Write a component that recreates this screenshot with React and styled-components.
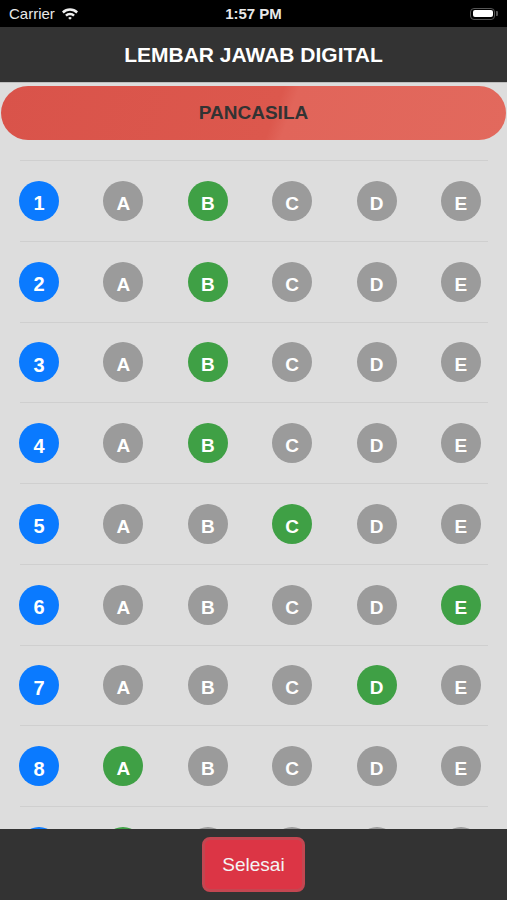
import React from "react"
import styled, { createGlobalStyle } from "styled-components"

const GlobalStyle = createGlobalStyle`
    html, body {
        margin: 0;
        padding: 0;
        background: #dddddd;
        font-family: "Liberation Sans", Arial, sans-serif;
    }
    * { box-sizing: border-box; }
`

const Screen = styled.div`
    width: 507px;
    height: 900px;
    display: flex;
    flex-direction: column;
    background: #dddddd;
    overflow: hidden;
`

const StatusBar = styled.div`
    height: 27px;
    background: #000;
    color: #e8e8e8;
    display: grid;
    grid-template-columns: 1fr auto 1fr;
    align-items: center;
    padding: 0 9px 0 9px;
    font-size: 15px;
`

const Carrier = styled.div`
    display: flex;
    align-items: center;
    gap: 6px;
`

const Time = styled.div`
    font-weight: bold;
    font-size: 15px;
`

const Battery = styled.div`
    justify-self: end;
    display: flex;
    align-items: center;
`

const BatteryBody = styled.div`
    width: 25px;
    height: 12px;
    border: 1.5px solid #555;
    border-radius: 4px;
    padding: 1.5px;
    &::after {
        content: "";
        display: block;
        width: 100%;
        height: 100%;
        background: #fff;
        border-radius: 2px;
    }
`

const BatteryTip = styled.div`
    width: 2px;
    height: 5px;
    background: #555;
    border-radius: 0 1px 1px 0;
    margin-left: 1px;
`

const Header = styled.header`
    height: 56px;
    background: #333333;
    border-bottom: 1px solid #bdbdbd;
    color: #fff;
    display: flex;
    align-items: center;
    justify-content: center;
    font-weight: bold;
    font-size: 21px;
`

const Subject = styled.div`
    margin: 3px 1px 0 1px;
    height: 54px;
    border-radius: 27px;
    background: linear-gradient(110deg, #d9534a 0%, #dc584d 54%, #e1655a 57%, #e2695d 100%);
    display: flex;
    align-items: center;
    justify-content: center;
    color: #333;
    font-weight: bold;
    font-size: 19px;
`

const List = styled.div`
    flex: 1;
    margin-top: 20px;
    padding: 0 19px 0 20px;
    overflow: hidden;
`

const Row = styled.div`
    height: 80.75px;
    border-top: 1px solid #cfcfcf;
    display: flex;
    align-items: center;
    justify-content: space-between;
    padding-right: 7px;
`

const Bubble = styled.div`
    width: 40px;
    height: 40px;
    border-radius: 50%;
    background: ${p => p.$kind === "num" ? "#0a7aff" : p.$kind === "on" ? "#3fa045" : "#9b9b9b"};
    color: #fff;
    font-weight: bold;
    font-size: ${p => p.$kind === "num" ? "20px" : "19px"};
    display: flex;
    align-items: center;
    justify-content: center;
    padding-top: 6px;
    margin-left: -1px;
`

const Footer = styled.footer`
    height: 71px;
    background: #333333;
    display: flex;
    justify-content: center;
    padding-top: 8px;
`

const DoneButton = styled.button`
    width: 103px;
    height: 55px;
    background: #dc3545;
    border: 3px solid #c44651;
    border-radius: 8px;
    color: #f4f4f4;
    font-family: "Liberation Sans", Arial, sans-serif;
    font-size: 19px;
    cursor: pointer;
`

const Wifi = () =>
    <svg width="18" height="13" viewBox="0 0 18 13">
        <path d="M1 4.6 A11.5 11.5 0 0 1 17 4.6 L15.3 6.4 A9 9 0 0 0 2.7 6.4 Z" fill="#eee"/>
        <path d="M4.1 7.8 A7 7 0 0 1 13.9 7.8 L12.2 9.5 A4.6 4.6 0 0 0 5.8 9.5 Z" fill="#eee"/>
        <path d="M7.2 10.9 A2.6 2.6 0 0 1 10.8 10.9 L9 12.8 Z" fill="#eee"/>
    </svg>

const options = ["A", "B", "C", "D", "E"]
const answers = ["B", "B", "B", "B", "C", "E", "D", "A", "A"]

const App = () =>
    <Screen>
        <GlobalStyle/>
        <StatusBar>
            <Carrier>Carrier <Wifi/></Carrier>
            <Time>1:57 PM</Time>
            <Battery><BatteryBody/><BatteryTip/></Battery>
        </StatusBar>
        <Header>LEMBAR JAWAB DIGITAL</Header>
        <Subject>PANCASILA</Subject>
        <List>
            {answers.map((ans, i) =>
                <Row key={i}>
                    <Bubble $kind="num">{i + 1}</Bubble>
                    {options.map(o =>
                        <Bubble key={o} $kind={o === ans ? "on" : "off"}>{o}</Bubble>
                    )}
                </Row>
            )}
        </List>
        <Footer>
            <DoneButton>Selesai</DoneButton>
        </Footer>
    </Screen>

export default App
